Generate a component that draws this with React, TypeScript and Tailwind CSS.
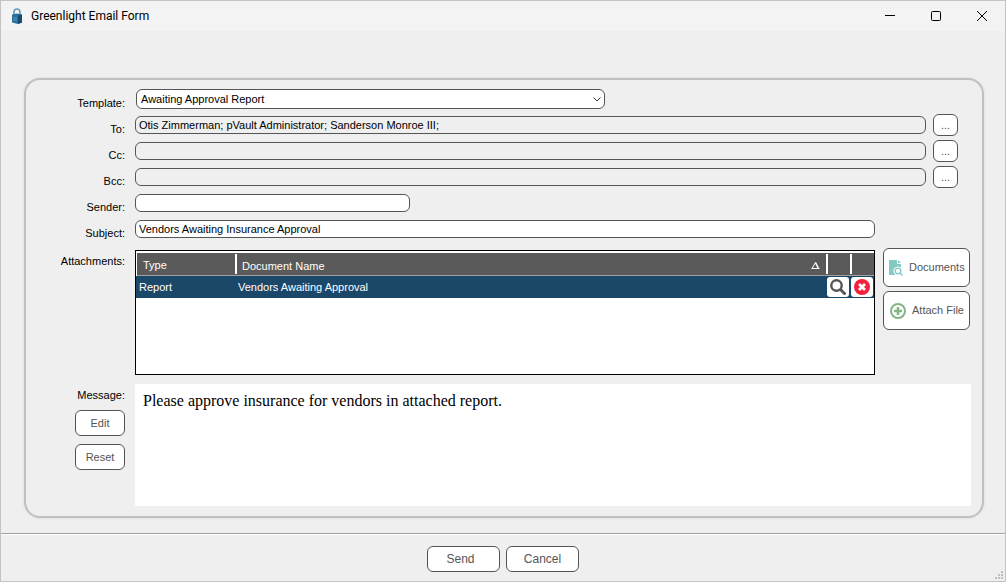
import type { ReactNode } from 'react';

const fieldClass = 'h-[18px] rounded-md border border-[#555] px-[3px] text-[11px] leading-4 text-black outline-none';
const buttonClass = 'rounded-md border border-[#555] bg-white text-[#555]';

interface RowProps {
  id: string;
  label: string;
  children: ReactNode;
}

/** One labelled line of the form. */
function Row({ id, label, children }: RowProps) {
  return (
    <div className="flex h-[26px] items-center">
      <label htmlFor={id} className="w-[99px] shrink-0 pt-2 text-right text-[11px] leading-4">
        {label}
      </label>
      <div className="flex min-w-0 flex-1 items-center pl-[10px]">{children}</div>
    </div>
  );
}

function RecipientRow({ id, label, value = '' }: { id: string; label: string; value?: string }) {
  return (
    <Row id={id} label={label}>
      <input id={id} readOnly defaultValue={value} className={`${fieldClass} min-w-0 flex-1 bg-[#efefef]`} />
      <button
        type="button"
        aria-label={`Choose ${label}`}
        className={`${buttonClass} mr-[13px] ml-[7px] h-[22px] w-[25px] text-[11px] leading-4`}
      >
        ...
      </button>
    </Row>
  );
}

function LockIcon() {
  return (
    <svg width="12" height="16" viewBox="0 0 12 16" aria-hidden>
      <path d="M3 7V4a3 3 0 0 1 6 0v3" fill="none" stroke="#6a9ab8" strokeWidth="1.6" />
      <path d="M1 6.5L6 5.5l5 1v8L7 16l-6-1.5z" fill="#2b6f9f" />
      <path d="M7 7.5l4-1v8L7 16z" fill="#174b72" />
      <path d="M3 9v4M5 9.2v4" stroke="#5fa3cc" strokeWidth="0.8" />
    </svg>
  );
}

function TitleBar() {
  return (
    <header className="flex h-[30px] items-center bg-[#f3f3f3] pl-[10px]">
      <LockIcon />
      <h1 className="ml-2 flex-1 font-[Roboto,sans-serif] text-[12px] leading-4">Greenlight Email Form</h1>
      <div className="flex">
        <button type="button" aria-label="Minimize" className="flex h-7 w-[46px] items-center justify-center">
          <svg width="10" height="10" viewBox="0 0 10 10" stroke="#000">
            <path d="M0 4.5h10" />
          </svg>
        </button>
        <button type="button" aria-label="Maximize" className="flex h-7 w-[46px] items-center justify-center">
          <svg width="10" height="10" viewBox="0 0 10 10" fill="none" stroke="#000">
            <rect x="0.5" y="0.5" width="9" height="9" rx="1" />
          </svg>
        </button>
        <button type="button" aria-label="Close" className="flex h-7 w-[46px] items-center justify-center">
          <svg width="10" height="10" viewBox="0 0 10 10" stroke="#000">
            <path d="M0 0l10 10M10 0L0 10" />
          </svg>
        </button>
      </div>
    </header>
  );
}

function AttachmentsTable() {
  return (
    <div className="h-[125px] min-w-0 flex-1 border border-black bg-white">
      <table
        aria-labelledby="attachments-label"
        className="w-full table-fixed border-separate border-spacing-0 text-left text-[11px] leading-4 text-white"
      >
        <thead>
          <tr className="h-[25px] bg-[#5a5a5a] shadow-[inset_0_2px_0_#fff,inset_0_-1px_0_#a0a0a0]">
            <th className="w-[99px] border-l border-white p-0 pt-[3px] pl-[6px] font-normal">Type</th>
            <th className="p-0 pt-px font-normal">
              <div className="flex h-5 items-center justify-between border-l-2 border-white pt-[3px] pr-[6px] pl-[5px]">
                Document Name
                <svg width="9" height="8" viewBox="0 0 9 8" fill="none" stroke="#fff">
                  <path d="M0.5 6.5h8M1 6.5L4.5 0.5" />
                  <path d="M4.5 0.5L7.5 6.5" strokeWidth="1.6" />
                </svg>
              </div>
            </th>
            <th aria-label="View" className="w-6 p-0 pt-px">
              <div className="h-5 border-l-2 border-white" />
            </th>
            <th aria-label="Remove" className="w-6 p-0 pt-px">
              <div className="h-5 border-l-2 border-white" />
            </th>
          </tr>
        </thead>
        <tbody>
          <tr className="h-[22px] bg-[#1b4769]">
            <td className="p-0 pl-[3px]">Report</td>
            <td className="p-0 pl-[3px]">Vendors Awaiting Approval</td>
            <td className="p-0 pl-px">
              <button type="button" aria-label="View document" className="flex h-5 w-[22px] items-center justify-center rounded-[3px] bg-white">
                <svg width="16" height="16" viewBox="0 0 16 16" fill="none" stroke="#555" strokeWidth="2.4">
                  <circle cx="6.5" cy="6.5" r="5.2" />
                  <path d="M10.5 10.5l5 5" strokeWidth="3" />
                </svg>
              </button>
            </td>
            <td className="p-0 pl-px">
              <button type="button" aria-label="Remove document" className="flex h-5 w-[22px] items-center justify-center rounded-[3px] bg-white">
                <svg width="16" height="16" viewBox="0 0 16 16">
                  <circle cx="8" cy="8" r="8" fill="#f5213c" />
                  <path d="M5 5l6 6M11 5l-6 6" stroke="#fff" strokeWidth="2.8" />
                </svg>
              </button>
            </td>
          </tr>
        </tbody>
      </table>
    </div>
  );
}

function DocumentsIcon() {
  return (
    <svg width="14" height="16" viewBox="0 0 14 16" className="shrink-0" aria-hidden>
      <path d="M0 0h8v4h4v3.5a4.5 4.5 0 0 0-6 7V15H0z" fill="#83c9c4" />
      <path d="M9 0l3 3H9z" fill="#83c9c4" />
      <circle cx="9" cy="11" r="2.8" fill="none" stroke="#83c9c4" strokeWidth="1.3" />
      <path d="M11 13l2.5 2.5" stroke="#83c9c4" strokeWidth="1.5" />
    </svg>
  );
}

function AttachIcon() {
  return (
    <svg width="16" height="16" viewBox="0 0 16 16" fill="none" stroke="#84b585" className="shrink-0" aria-hidden>
      <circle cx="8" cy="8" r="7" strokeWidth="2" />
      <path d="M8 4v8M4 8h8" strokeWidth="2.6" />
    </svg>
  );
}

function ResizeGrip() {
  return (
    <svg width="8" height="8" viewBox="0 0 8 8" fill="#bfbfbf" className="absolute right-[2px] bottom-[2px]" aria-hidden>
      <path d="M6 0h2v2H6zM3 3h2v2H3zM6 3h2v2H6zM0 6h2v2H0zM3 6h2v2H3zM6 6h2v2H6z" />
    </svg>
  );
}

export default function App() {
  return (
    <div className="relative flex min-h-screen flex-col border border-[#c3c3c3] bg-[#efefef] font-['Liberation_Sans',Arial,sans-serif] text-black">
      <TitleBar />

      <form className="flex flex-1 flex-col">
        <main className="mt-[47px] mr-[21px] mb-[15px] ml-[23px] flex-1 rounded-[16px] border-2 border-[#c0c0c0] pt-[6px] pr-[11px] pb-[9px] shadow-[0_0_2px_#ccc]">
          <Row id="template" label="Template:">
            <div className="relative ml-px w-[469px]">
              <select
                id="template"
                className="block h-5 w-full appearance-none rounded-md border border-[#555] bg-white pl-1 text-[11px] leading-4 outline-none"
              >
                <option>Awaiting Approval Report</option>
              </select>
              <svg width="8" height="5" viewBox="0 0 8 5" fill="none" stroke="#333" className="pointer-events-none absolute top-2 right-1" aria-hidden>
                <path d="M0.5 0.5L4 4l3.5-3.5" />
              </svg>
            </div>
          </Row>
          <RecipientRow id="to" label="To:" value="Otis Zimmerman; pVault Administrator; Sanderson Monroe III;" />
          <RecipientRow id="cc" label="Cc:" />
          <RecipientRow id="bcc" label="Bcc:" />
          <Row id="sender" label="Sender:">
            <input id="sender" className={`${fieldClass} w-[275px] bg-white`} />
          </Row>
          <Row id="subject" label="Subject:">
            <input id="subject" defaultValue="Vendors Awaiting Insurance Approval" className={`${fieldClass} mr-24 min-w-0 flex-1 bg-white`} />
          </Row>

          <div className="mt-[6px] flex">
            <span id="attachments-label" className="w-[99px] shrink-0 pt-[5px] text-right text-[11px] leading-4">
              Attachments:
            </span>
            <div className="flex min-w-0 flex-1 pt-[2px] pl-[10px]">
              <AttachmentsTable />
            </div>
            <div className="mr-px ml-2 flex w-[87px] shrink-0 flex-col gap-1 text-[11px]">
              <button type="button" className={`${buttonClass} flex h-[39px] items-center gap-[6px] pl-[5px]`}>
                <DocumentsIcon />
                Documents
              </button>
              <button type="button" className={`${buttonClass} flex h-[39px] items-center gap-[6px] pl-[6px]`}>
                <AttachIcon />
                Attach File
              </button>
            </div>
          </div>

          <div className="mt-[9px] flex">
            <div className="flex w-[99px] shrink-0 flex-col items-end text-[11px] leading-4">
              <label htmlFor="message" className="pt-[3px]">
                Message:
              </label>
              <button type="button" className={`${buttonClass} mt-[7px] h-[26px] w-[50px]`}>
                Edit
              </button>
              <button type="button" className={`${buttonClass} mt-2 h-[26px] w-[50px]`}>
                Reset
              </button>
            </div>
            <textarea
              id="message"
              defaultValue="Please approve insurance for vendors in attached report."
              className="ml-[10px] h-[122px] min-w-0 flex-1 resize-none bg-white px-2 py-[7px] font-['Liberation_Serif',serif] text-[16px] leading-5 outline-none"
            />
          </div>
        </main>

        <footer className="flex h-12 justify-center gap-[6px] border-t border-[#a0a0a0] pt-3 text-[12px] leading-4 shadow-[inset_0_1px_0_#fff]">
          <button type="submit" className={`${buttonClass} h-[26px] w-[73px] pr-[6px]`}>
            Send
          </button>
          <button type="button" className={`${buttonClass} h-[26px] w-[73px]`}>
            Cancel
          </button>
        </footer>
      </form>
      <ResizeGrip />
    </div>
  );
}
